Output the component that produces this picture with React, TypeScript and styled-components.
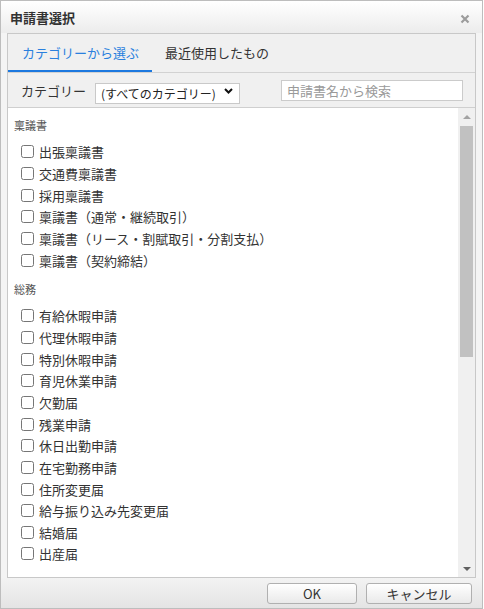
import styled, { createGlobalStyle } from "styled-components";

const GlobalStyle = createGlobalStyle`
  html, body {
    margin: 0;
    padding: 0;
    background: #ffffff;
  }
  body {
    font-family: "Noto Sans CJK JP", "Noto Sans", sans-serif;
    color: #333333;
  }
  * {
    box-sizing: border-box;
  }
`;

const Dialog = styled.div`
  width: 483px;
  height: 609px;
  border: 1px solid #bdbdbd;
  background: #f4f4f4;
  display: flex;
  flex-direction: column;
`;

const Header = styled.div`
  height: 32px;
  flex: none;
  display: flex;
  align-items: center;
  justify-content: space-between;
  padding: 0 12px 0 9px;
  background: linear-gradient(#ffffff, #ececec);
`;

const Title = styled.div`
  font-size: 13px;
  font-weight: 700;
  color: #333333;
  line-height: 1;
`;

const CloseButton = styled.button`
  border: none;
  background: none;
  padding: 0;
  width: 11px;
  height: 11px;
  margin-top: 3px;
  display: flex;
  align-items: center;
  justify-content: center;
  cursor: pointer;
`;

const Panel = styled.div`
  flex: 1;
  margin: 0 6px;
  border: 1px solid #c8c8c8;
  background: #f0f0f0;
  display: flex;
  flex-direction: column;
  min-height: 0;
`;

const TabBar = styled.div`
  height: 39px;
  flex: none;
  display: flex;
  border-bottom: 1px solid #d2d2d2;
`;

const Tab = styled.div<{ $active?: boolean }>`
  height: 38px;
  display: flex;
  align-items: center;
  padding: 0 13px 0 ${(p) => (p.$active ? "14px" : "13px")};
  font-size: 13px;
  color: ${(p) => (p.$active ? "#2a80de" : "#333333")};
  border-bottom: 2px solid ${(p) => (p.$active ? "#1c78df" : "transparent")};
  cursor: pointer;
`;

const FilterRow = styled.div`
  height: 35px;
  flex: none;
  display: flex;
  align-items: center;
  padding: 0 12px 0 13px;
  border-bottom: 1px solid #cfcfcf;
`;

const FilterLabel = styled.span`
  font-size: 13px;
  color: #333333;
  margin-right: 9px;
`;

const SelectBox = styled.div`
  position: relative;
  width: 145px;
  height: 21px;
`;

const Select = styled.select`
  appearance: none;
  width: 100%;
  height: 100%;
  border: 1px solid #c9c9c9;
  background: #ffffff;
  font-family: inherit;
  font-size: 12px;
  color: #222222;
  padding: 0 0 0 5px;
  outline: none;
`;

const Chevron = styled.svg`
  position: absolute;
  right: 7px;
  top: 8px;
  pointer-events: none;
`;

const Search = styled.input`
  margin-left: auto;
  width: 182px;
  height: 21px;
  border: 1px solid #cbcbcb;
  background: #ffffff;
  font-family: inherit;
  font-size: 13px;
  padding: 0 5px;
  outline: none;
  &::placeholder {
    color: #9a9a9a;
  }
`;

const ListArea = styled.div`
  flex: 1;
  min-height: 0;
  display: flex;
  background: #ffffff;
`;

const List = styled.div`
  flex: 1;
  min-width: 0;
  overflow: hidden;
`;

const ScrollBar = styled.div`
  width: 17px;
  flex: none;
  display: flex;
  flex-direction: column;
  background: #f0f0f0;
`;

const ScrollArrow = styled.div<{ $down?: boolean; $disabled?: boolean }>`
  height: 17px;
  flex: none;
  display: flex;
  align-items: center;
  justify-content: center;

  &::before {
    content: "";
    width: 0;
    height: 0;
    border-left: 4px solid transparent;
    border-right: 4px solid transparent;
    ${(p) =>
      p.$down
        ? `border-top: 4px solid ${p.$disabled ? "#a3a3a3" : "#606060"};`
        : `border-bottom: 4px solid ${p.$disabled ? "#a3a3a3" : "#606060"};`}
  }
`;

const ScrollTrack = styled.div`
  flex: 1;
  padding: 1px 2px;
`;

const Thumb = styled.div<{ $size: number }>`
  height: ${(p) => p.$size}px;
  background: #c1c1c1;
`;

const Group = styled.div`
  padding-top: 9px;
  & + & {
    padding-top: 10px;
  }
`;

const GroupTitle = styled.div`
  height: 17px;
  line-height: 17px;
  padding-left: 6px;
  margin-bottom: 7px;
  font-size: 11px;
  color: #555555;
`;

const Item = styled.label`
  height: 21.67px;
  display: flex;
  align-items: center;
  padding-left: 13px;
  font-size: 13px;
  color: #333333;
  white-space: nowrap;
  cursor: pointer;
`;

const Check = styled.input`
  width: 13px;
  height: 13px;
  margin: 0 5px 0 0;
  flex: none;
`;

const Footer = styled.div`
  height: 30px;
  flex: none;
  display: flex;
  align-items: center;
  justify-content: flex-end;
  gap: 9px;
  padding-right: 10px;
  background: linear-gradient(#f3f3f3, #e4e4e4);
`;

const Button = styled.button<{ $width: number }>`
  width: ${(p) => p.$width}px;
  height: 21px;
  border: 1px solid #b0b0b0;
  border-radius: 3px;
  background: linear-gradient(#ffffff, #e9e9e9);
  font-family: inherit;
  font-size: 13px;
  color: #333333;
  padding: 0;
  cursor: pointer;
`;

const groups: { title: string; items: string[] }[] = [
  {
    title: "稟議書",
    items: [
      "出張稟議書",
      "交通費稟議書",
      "採用稟議書",
      "稟議書（通常・継続取引）",
      "稟議書（リース・割賦取引・分割支払）",
      "稟議書（契約締結）",
    ],
  },
  {
    title: "総務",
    items: [
      "有給休暇申請",
      "代理休暇申請",
      "特別休暇申請",
      "育児休業申請",
      "欠勤届",
      "残業申請",
      "休日出勤申請",
      "在宅勤務申請",
      "住所変更届",
      "給与振り込み先変更届",
      "結婚届",
      "出産届",
    ],
  },
  {
    title: "経理",
    items: [
      "経費精算書",
      "旅費精算書",
      "仮払申請",
      "仮払精算書",
      "支払依頼書",
      "請求書発行依頼",
      "立替金精算書",
    ],
  },
];

export default function App() {
  return (
    <>
      <GlobalStyle />
      <Dialog>
        <Header>
          <Title>申請書選択</Title>
          <CloseButton aria-label="close">
            <svg width="10" height="10" viewBox="0 0 10 10">
              <path d="M1.5 1.5 L8.5 8.5 M8.5 1.5 L1.5 8.5" stroke="#9c9c9c" strokeWidth="2.2" />
            </svg>
          </CloseButton>
        </Header>
        <Panel>
          <TabBar>
            <Tab $active>カテゴリーから選ぶ</Tab>
            <Tab>最近使用したもの</Tab>
          </TabBar>
          <FilterRow>
            <FilterLabel>カテゴリー</FilterLabel>
            <SelectBox>
              <Select defaultValue="all">
                <option value="all">(すべてのカテゴリー)</option>
                {groups.map((g) => (
                  <option key={g.title} value={g.title}>
                    {g.title}
                  </option>
                ))}
              </Select>
              <Chevron width="9" height="6" viewBox="0 0 9 6">
                <path d="M1 1 L4.5 4.5 L8 1" fill="none" stroke="#111" strokeWidth="2" />
              </Chevron>
            </SelectBox>
            <Search placeholder="申請書名から検索" />
          </FilterRow>
          <ListArea>
            <List>
              {groups.map((g) => (
                <Group key={g.title}>
                  <GroupTitle>{g.title}</GroupTitle>
                  {g.items.map((name) => (
                    <Item key={name}>
                      <Check type="checkbox" />
                      {name}
                    </Item>
                  ))}
                </Group>
              ))}
            </List>
            <ScrollBar>
              <ScrollArrow $disabled />
              <ScrollTrack>
                <Thumb $size={231} />
              </ScrollTrack>
              <ScrollArrow $down />
            </ScrollBar>
          </ListArea>
        </Panel>
        <Footer>
          <Button $width={90}>OK</Button>
          <Button $width={106}>キャンセル</Button>
        </Footer>
      </Dialog>
    </>
  );
}
